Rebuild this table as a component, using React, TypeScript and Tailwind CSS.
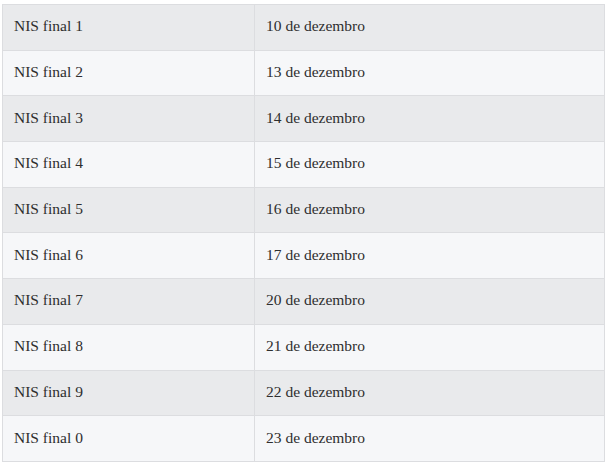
const rows = [
  ["NIS final 1", "10 de dezembro"],
  ["NIS final 2", "13 de dezembro"],
  ["NIS final 3", "14 de dezembro"],
  ["NIS final 4", "15 de dezembro"],
  ["NIS final 5", "16 de dezembro"],
  ["NIS final 6", "17 de dezembro"],
  ["NIS final 7", "20 de dezembro"],
  ["NIS final 8", "21 de dezembro"],
  ["NIS final 9", "22 de dezembro"],
  ["NIS final 0", "23 de dezembro"],
];

export default function App() {
  return (
    <div className="min-h-screen bg-white pl-[2px] pr-[4px] pt-[4px] font-['Liberation_Serif',serif] text-[15.5px] text-[#2e2e2e]">
      <table className="w-[603px] border-collapse border border-[#dcdde0]">
        <tbody>
          {rows.map(([nis, date], i) => (
            <tr key={nis} className={i % 2 === 0 ? "bg-[#e9eaec]" : "bg-[#f6f7f9]"}>
              <td className="h-[45.7px] w-[252px] border border-[#dcdde0] px-[11px] pb-[2px] align-middle leading-5">
                {nis}
              </td>
              <td className="h-[45.7px] border border-[#dcdde0] px-[11px] pb-[2px] align-middle leading-5">
                {date}
              </td>
            </tr>
          ))}
        </tbody>
      </table>
    </div>
  );
}
